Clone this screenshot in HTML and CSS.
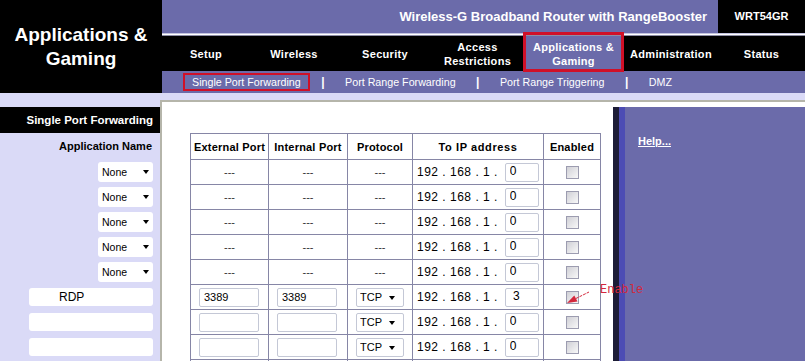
FILE: index.html
```html
<!DOCTYPE html>
<html lang="en">
  <head>
    <meta charset="UTF-8" />
    <meta name="viewport" content="width=device-width, initial-scale=1.0" />
    <title>Applications &amp; Gaming</title>
    <link rel="stylesheet" href="styles.css">
  </head>
  <body>
    <div class="top">
      <div class="logo">Applications &amp;<br>Gaming</div>
      <div class="top-right">
        <div class="title-bar">
          <div class="title">Wireless-G Broadband Router with RangeBooster</div>
          <div class="model">WRT54GR</div>
        </div>
        <div class="title-line"></div>
        <div class="nav">
          <div class="nav-item" style="width: 88px">Setup</div>
          <div class="nav-item" style="width: 88px">Wireless</div>
          <div class="nav-item" style="width: 94px">Security</div>
          <div class="nav-item" style="width: 91px">Access<br>Restrictions</div>
          <div class="nav-item active" style="width: 101px">Applications &amp;<br>Gaming</div>
          <div class="nav-item" style="width: 94px">Administration</div>
          <div class="nav-item" style="width: 87px">Status</div>
        </div>
        <div class="subnav">
          <span class="subnav-link active">Single Port Forwarding</span>
          <span class="subnav-sep">|</span>
          <span class="subnav-link">Port Range Forwarding</span>
          <span class="subnav-sep">|</span>
          <span class="subnav-link">Port Range Triggering</span>
          <span class="subnav-sep">|</span>
          <span class="subnav-link">DMZ</span>
        </div>
      </div>
    </div>
    <div class="strip"></div>

    <div class="body">
      <div class="side">
        <div class="side-title">Single Port Forwarding</div>
        <div class="side-label">Application Name</div>
        <div class="side-row"><span class="select app"><select><option>None</option></select></span></div>
        <div class="side-row"><span class="select app"><select><option>None</option></select></span></div>
        <div class="side-row"><span class="select app"><select><option>None</option></select></span></div>
        <div class="side-row"><span class="select app"><select><option>None</option></select></span></div>
        <div class="side-row"><span class="select app"><select><option>None</option></select></span></div>
        <div class="side-row"><input class="field" type="text" value="RDP"></div>
        <div class="side-row"><input class="field" type="text" value=""></div>
        <div class="side-row"><input class="field" type="text" value=""></div>
      </div>

      <div class="main">
        <div class="content">
          <table class="pf-table">
            <colgroup>
              <col style="width: 78px">
              <col style="width: 79px">
              <col style="width: 65px">
              <col style="width: 131px">
              <col style="width: 57px">
            </colgroup>
            <tr>
              <th>External Port</th>
              <th>Internal Port</th>
              <th>Protocol</th>
              <th class="spaced">To IP address</th>
              <th>Enabled</th>
            </tr>
            <tr>
              <td>---</td><td>---</td><td>---</td>
              <td class="ip">192 . 168 . 1 . <input class="octet" type="text" value="0"></td>
              <td><input class="chk" type="checkbox"></td>
            </tr>
            <tr>
              <td>---</td><td>---</td><td>---</td>
              <td class="ip">192 . 168 . 1 . <input class="octet" type="text" value="0"></td>
              <td><input class="chk" type="checkbox"></td>
            </tr>
            <tr>
              <td>---</td><td>---</td><td>---</td>
              <td class="ip">192 . 168 . 1 . <input class="octet" type="text" value="0"></td>
              <td><input class="chk" type="checkbox"></td>
            </tr>
            <tr>
              <td>---</td><td>---</td><td>---</td>
              <td class="ip">192 . 168 . 1 . <input class="octet" type="text" value="0"></td>
              <td><input class="chk" type="checkbox"></td>
            </tr>
            <tr>
              <td>---</td><td>---</td><td>---</td>
              <td class="ip">192 . 168 . 1 . <input class="octet" type="text" value="0"></td>
              <td><input class="chk" type="checkbox"></td>
            </tr>
            <tr>
              <td class="in"><input class="port" type="text" value="3389"></td>
              <td class="in"><input class="port" type="text" value="3389"></td>
              <td class="in"><span class="select proto"><select><option>TCP</option></select></span></td>
              <td class="ip">192 . 168 . 1 . <input class="octet" type="text" value=" 3"></td>
              <td class="mark">
                <input class="chk" type="checkbox" checked>
                <span class="note">
                  <svg class="note-arrow" width="30" height="18" viewBox="0 0 30 18">
                    <line x1="12.9" y1="11.5" x2="26" y2="5" stroke="#d4283c" stroke-width="1" stroke-dasharray="3 1" />
                    <polygon points="4,16 14.5,14.6 11.3,8.4" fill="#d4283c" />
                  </svg>
                  <span class="note-text">Enable</span>
                </span>
              </td>
            </tr>
            <tr>
              <td class="in"><input class="port" type="text" value=""></td>
              <td class="in"><input class="port" type="text" value=""></td>
              <td class="in"><span class="select proto"><select><option>TCP</option></select></span></td>
              <td class="ip">192 . 168 . 1 . <input class="octet" type="text" value="0"></td>
              <td><input class="chk" type="checkbox"></td>
            </tr>
            <tr>
              <td class="in"><input class="port" type="text" value=""></td>
              <td class="in"><input class="port" type="text" value=""></td>
              <td class="in"><span class="select proto"><select><option>TCP</option></select></span></td>
              <td class="ip">192 . 168 . 1 . <input class="octet" type="text" value="0"></td>
              <td><input class="chk" type="checkbox"></td>
            </tr>
            <tr>
              <td></td><td></td><td></td><td></td><td></td>
            </tr>
          </table>
        </div>
        <div class="help">
          <a class="help-link" href="#">Help...</a>
        </div>
      </div>
    </div>
  </body>
</html>
```

FILE: styles.css
```css
* {
  box-sizing: border-box;
}
html,
body {
  margin: 0;
  height: 100%;
  overflow: hidden;
}
body {
  font-family: "Liberation Sans", Arial, sans-serif;
  background: #fff;
  color: #000;
}

/* header */
.top {
  display: flex;
  height: 93px;
}
.logo {
  width: 162px;
  background: #000;
  color: #fff;
  font-weight: bold;
  font-size: 19px;
  line-height: 24px;
  text-align: center;
  display: flex;
  align-items: center;
  justify-content: center;
}
.top-right {
  flex: 1;
  display: flex;
  flex-direction: column;
}
.title-bar {
  height: 33px;
  display: flex;
}
.title {
  flex: 1;
  background: #6b6baa;
  color: #fff;
  font-weight: bold;
  font-size: 13px;
  line-height: 33px;
  text-align: right;
  padding-right: 11px;
}
.model {
  width: 87px;
  background: #000;
  color: #fff;
  font-weight: bold;
  font-size: 11px;
  line-height: 33px;
  text-align: center;
}
.title-line {
  height: 3px;
  background: linear-gradient(#a8a8d4, #fff 50%, #55557a);
}
.nav {
  height: 35px;
  background: #000;
  display: flex;
}
.nav-item {
  color: #fff;
  font-weight: bold;
  font-size: 11px;
  letter-spacing: 0.3px;
  line-height: 14px;
  text-align: center;
  display: flex;
  align-items: center;
  justify-content: center;
}
.nav-item.active {
  background: #6b6baa;
  position: relative;
}
.nav-item.active::before {
  content: "";
  position: absolute;
  left: 0;
  right: 0;
  top: -4px;
  bottom: -1px;
  border: 3px solid #d01028;
}
.subnav {
  height: 22px;
  background: #6b6baa;
  display: flex;
  align-items: center;
  padding-left: 21px;
  color: #fff;
  font-size: 10.7px;
  white-space: nowrap;
}
.subnav-link {
  padding: 0 7px;
  border: 2px solid transparent;
  line-height: 14px;
}
.subnav-link.active {
  border-color: #d01028;
}
.subnav-sep {
  font-weight: bold;
  font-size: 12px;
  margin: 0 11.5px;
}
.strip {
  height: 7px;
  background: #dadaf7;
}

/* body */
.body {
  display: flex;
  height: 300px;
}
.side {
  width: 160px;
  background: #dadaf7;
  padding-top: 7px;
}
.side-title {
  height: 26px;
  line-height: 26px;
  background: #000;
  color: #fff;
  font-weight: bold;
  font-size: 11.5px;
  text-align: right;
  padding-right: 7px;
}
.side-label {
  height: 26px;
  line-height: 26px;
  font-weight: bold;
  font-size: 11px;
  text-align: right;
  padding-right: 8px;
}
.side-row {
  height: 25px;
  display: flex;
  align-items: center;
  justify-content: flex-end;
  padding-right: 7px;
}
.field {
  width: 124px;
  height: 18px;
  border: none;
  border-radius: 3px;
  background: #fff;
  font-family: "Liberation Sans", Arial, sans-serif;
  font-size: 12px;
  padding: 0 0 0 30px;
  margin: 0;
}

.select {
  position: relative;
  display: inline-block;
  vertical-align: middle;
}
.select select {
  appearance: none;
  -webkit-appearance: none;
  display: block;
  margin: 0;
  background: #fff;
  color: #000;
  font-family: "Liberation Sans", Arial, sans-serif;
  padding: 0 0 0 4px;
}
.select::after {
  content: "";
  position: absolute;
  right: 4px;
  top: 8px;
  border-left: 3.5px solid transparent;
  border-right: 3.5px solid transparent;
  border-top: 4px solid #000;
}
.select.app select {
  width: 55px;
  height: 20px;
  border: none;
  border-radius: 3px;
  font-size: 10.5px;
}
.select.proto select {
  width: 48px;
  height: 19px;
  border: 1px solid #c4c8d6;
  border-radius: 2px;
  font-size: 11px;
  padding-left: 3px;
}
.select.proto::after {
  right: 9px;
}

.main {
  flex: 1;
  display: flex;
  background: #fff;
  border-top: 2px solid #b5b5aa;
  border-left: 2px solid #b5b5aa;
}
.content {
  width: 451px;
  padding: 31px 0 0 28px;
}
.help {
  flex: 1;
  margin-top: 5px;
  background: linear-gradient(to right, #1c1c36 0 6px, #4c4cb4 6px 12px, #6b6baa 12px);
  padding: 24px 0 0 25px;
}
.help-link {
  color: #fff;
  font-weight: bold;
  font-size: 11px;
  line-height: 14px;
}

/* table */
.pf-table {
  border-collapse: collapse;
  table-layout: fixed;
  width: 411px;
  font-size: 11px;
}
.pf-table th,
.pf-table td {
  border: 1px solid #8686a6;
  padding: 0;
}
.pf-table th {
  height: 26px;
  font-weight: bold;
  letter-spacing: 0.2px;
}
.pf-table th.spaced {
  letter-spacing: 0.6px;
}
.pf-table td {
  height: 25px;
  text-align: center;
  color: #333;
}
.pf-table td.in {
  text-align: left;
  padding-left: 8px;
}
.pf-table td.ip {
  text-align: left;
  padding-left: 4px;
  font-size: 12px;
  letter-spacing: 0.5px;
  white-space: nowrap;
  color: #000;
}
.pf-table td.mark {
  position: relative;
}
.port {
  width: 60px;
  height: 19px;
  border: 1px solid #c4c8d6;
  border-radius: 2px;
  font-family: "Liberation Sans", Arial, sans-serif;
  font-size: 11px;
  padding: 0 0 0 4px;
  margin: 0;
  vertical-align: middle;
}
.octet {
  width: 34px;
  height: 19px;
  border: 1px solid #c4c8d6;
  border-radius: 2px;
  font-family: "Liberation Sans", Arial, sans-serif;
  font-size: 12px;
  letter-spacing: 0;
  padding: 0 0 2px 4px;
  margin: 0 0 0 3px;
  vertical-align: middle;
}
.chk {
  appearance: none;
  -webkit-appearance: none;
  width: 13px;
  height: 13px;
  margin: 0;
  border: 1px solid #9c9cb0;
  background: linear-gradient(135deg, #d0d0d6, #f8f8f8);
  vertical-align: middle;
}

/* annotation */
.note {
  position: absolute;
  left: 19px;
  top: 2px;
  z-index: 1;
}
.note-arrow {
  display: block;
}
.note-text {
  position: absolute;
  left: 37px;
  top: -3px;
  font-family: "Liberation Mono", "Courier New", monospace;
  font-size: 12px;
  line-height: 12px;
  color: #d4283c;
}
```
